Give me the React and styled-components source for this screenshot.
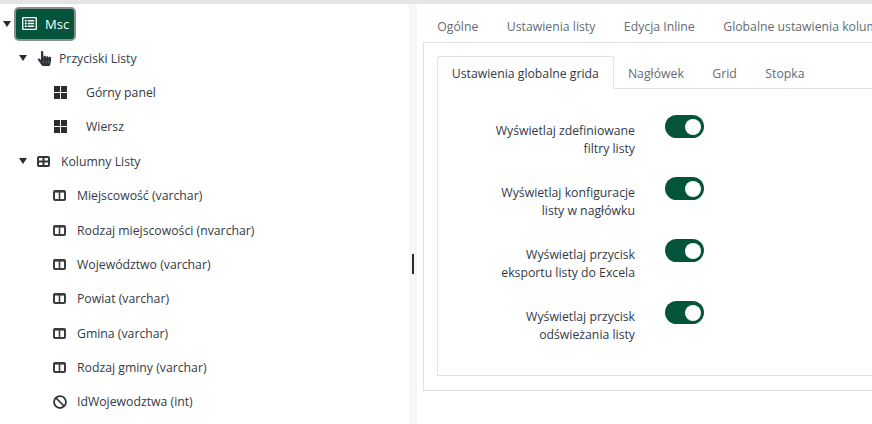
import React from 'react'
import styled, { createGlobalStyle } from 'styled-components'
import { FaRegListAlt, FaHandPointer, FaBan } from 'react-icons/fa'

const GREEN = '#03543a'

const Global = createGlobalStyle`
  html, body { margin: 0; padding: 0; height: 100%; overflow: hidden; background: #fff; }
  body { font-family: "Open Sans", "Noto Sans", sans-serif; font-size: 12.25px; color: #333a45; }
`

const Page = styled.div`
  width: 872px;
  height: 424px;
  display: flex;
  flex-direction: column;
  overflow: hidden;
`

const TopBar = styled.div`
  height: 4px;
  flex: none;
  background: #e4e5e7;
`

const Split = styled.div`
  flex: 1;
  display: flex;
  min-height: 0;
`

const TreePane = styled.div`
  width: 409px;
  flex: none;
  padding-top: 2.5px;
`

const Splitter = styled.div`
  width: 8px;
  flex: none;
  background: #f6f6f6;
  display: flex;
  align-items: center;
  justify-content: center;
  padding-top: 100px;
  box-sizing: border-box;
`

const Handle = styled.div`
  width: 2px;
  height: 20px;
  background: #2b2b2b;
`

const ContentPane = styled.div`
  flex: 1;
  min-width: 0;
  padding: 4px 0 0 6px;
  overflow: hidden;
`

const Row = styled.div`
  height: 34.4px;
  display: flex;
  align-items: center;
  padding-left: ${(p) => p.$indent}px;
  white-space: nowrap;
`

const Caret = styled.span`
  width: 0;
  height: 0;
  flex: none;
  border-left: 4px solid transparent;
  border-right: 4px solid transparent;
  border-top: 6px solid #2b2b2b;
  margin-right: ${(p) => p.$gap}px;
`

const NodeIcon = styled.span`
  display: flex;
  flex: none;
  width: ${(p) => p.$width}px;
  font-size: ${(p) => p.$size || 14}px;
  color: #2f3338;
`

const Selected = styled.div`
  height: 34px;
  width: 62px;
  box-sizing: border-box;
  display: flex;
  align-items: center;
  padding-left: 6px;
  border: 2px solid #87918d;
  border-radius: 5px;
  background: ${GREEN};
  color: #fff;
  font-weight: 500;
  font-size: 13px;
`

const SelectedIcon = styled.span`
  display: flex;
  width: 23px;
  font-size: 15px;
  color: #fff;
`

const Tabs = styled.div`
  display: flex;
  white-space: nowrap;
  height: ${(p) => p.$height}px;
  margin-bottom: ${(p) => (p.$overlap ? '-1px' : 0)};
`

const Tab = styled.div`
  padding: ${(p) => (p.$active ? '0 13.75px' : '2px 14.25px 0')};
  display: flex;
  align-items: center;
  color: ${(p) => (p.$active ? '#333a45' : '#636b74')};
  box-sizing: border-box;
  height: ${(p) => (p.$active ? '33px' : 'auto')};
  ${(p) =>
    p.$active &&
    `
    padding-top: 1px;
    background: #fff;
    border: 1px solid #dfe1e6;
    border-bottom-color: #fff;
    border-radius: 3px 3px 0 0;
    position: relative;
  `}
`

const OuterPanel = styled.div`
  width: 600px;
  height: 349px;
  box-sizing: border-box;
  border: 1px solid #dfe1e6;
  padding: 13px 0 0 13px;
`

const InnerPanel = styled.div`
  height: 288px;
  box-sizing: border-box;
  border: 1px solid #dfe1e6;
  padding-top: 26px;
`

const Setting = styled.div`
  height: 62px;
  display: flex;
  align-items: flex-start;
`

const Label = styled.div`
  width: 197px;
  padding-top: 7px;
  text-align: right;
  line-height: 18px;
  flex: none;
`

const Toggle = styled.div`
  width: 39px;
  height: 23px;
  margin-left: 30px;
  border-radius: 12px;
  background: ${GREEN};
  display: flex;
  align-items: center;
  justify-content: flex-end;
  padding-right: 3px;
  box-sizing: border-box;
`

const Knob = styled.div`
  width: 16px;
  height: 16px;
  border-radius: 50%;
  background: #fff;
`

// four square tiles, sharper than the FontAwesome glyph
const TilesIcon = () => (
  <svg width="13" height="13" viewBox="0 0 13 13" fill="#2c2a2e">
    <rect x="0" y="0" width="6" height="6" />
    <rect x="7" y="0" width="6" height="6" />
    <rect x="0" y="7" width="6" height="6" />
    <rect x="7" y="7" width="6" height="6" />
  </svg>
)

const TableIcon = () => (
  <svg width="13" height="11" viewBox="0 0 13 11" fill="none" stroke="#33363a" strokeWidth="2">
    <rect x="1" y="1" width="11" height="9" rx="1" />
    <path d="M1 5.5H12M6.5 1V10" />
  </svg>
)

const ColumnsIcon = () => (
  <svg width="13" height="11" viewBox="0 0 13 11" fill="none" stroke="#3a3d40" strokeWidth="2">
    <rect x="1" y="1" width="11" height="9" rx="1" />
    <path d="M1 1.6H12" />
    <path d="M6.5 1V10" strokeWidth="1.6" />
  </svg>
)

const columns = [
  'Miejscowość (varchar)',
  'Rodzaj miejscowości (nvarchar)',
  'Województwo (varchar)',
  'Powiat (varchar)',
  'Gmina (varchar)',
  'Rodzaj gminy (varchar)',
]

const settings = [
  ['Wyświetlaj zdefiniowane', 'filtry listy'],
  ['Wyświetlaj konfiguracje', 'listy w nagłówku'],
  ['Wyświetlaj przycisk', 'eksportu listy do Excela'],
  ['Wyświetlaj przycisk', 'odświeżania listy'],
]

export default function App() {
  return (
    <Page>
      <Global />
      <TopBar />
      <Split>
        <TreePane>
          <Row $indent={3}>
            <Caret $gap={3} />
            <Selected>
              <SelectedIcon><FaRegListAlt /></SelectedIcon>
              Msc
            </Selected>
          </Row>
          <Row $indent={19}>
            <Caret $gap={10} />
            <NodeIcon $width={22} $size={15}><FaHandPointer /></NodeIcon>
            Przyciski Listy
          </Row>
          <Row $indent={54}>
            <NodeIcon $width={32}><TilesIcon /></NodeIcon>
            Górny panel
          </Row>
          <Row $indent={54}>
            <NodeIcon $width={32}><TilesIcon /></NodeIcon>
            Wiersz
          </Row>
          <Row $indent={19}>
            <Caret $gap={10} />
            <NodeIcon $width={24}><TableIcon /></NodeIcon>
            Kolumny Listy
          </Row>
          {columns.map((c) => (
            <Row $indent={53} key={c}>
              <NodeIcon $width={24}><ColumnsIcon /></NodeIcon>
              {c}
            </Row>
          ))}
          <Row $indent={53}>
            <NodeIcon $width={24}><FaBan /></NodeIcon>
            IdWojewodztwa (int)
          </Row>
        </TreePane>
        <Splitter><Handle /></Splitter>
        <ContentPane>
          <Tabs $height={34}>
            <Tab>Ogólne</Tab>
            <Tab>Ustawienia listy</Tab>
            <Tab>Edycja Inline</Tab>
            <Tab>Globalne ustawienia kolumn</Tab>
          </Tabs>
          <OuterPanel>
            <Tabs $height={33} $overlap>
              <Tab $active>Ustawienia globalne grida</Tab>
              <Tab>Nagłówek</Tab>
              <Tab>Grid</Tab>
              <Tab>Stopka</Tab>
            </Tabs>
            <InnerPanel>
              {settings.map((lines) => (
                <Setting key={lines[1]}>
                  <Label>{lines[0]}<br />{lines[1]}</Label>
                  <Toggle><Knob /></Toggle>
                </Setting>
              ))}
            </InnerPanel>
          </OuterPanel>
        </ContentPane>
      </Split>
    </Page>
  )
}
